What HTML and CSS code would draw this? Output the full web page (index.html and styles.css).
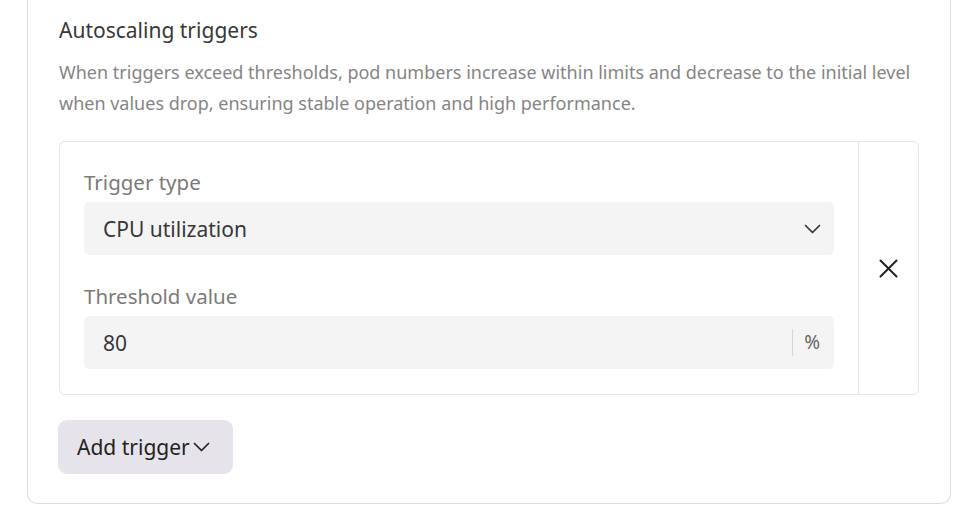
FILE: index.html
```html
<!DOCTYPE html>
<html>
<head>
<meta charset="utf-8">
<link rel="stylesheet" href="styles.css">
</head>
<body>
<div class="page">
  <section class="card">
    <h2 class="title">Autoscaling triggers</h2>
    <p class="desc">When triggers exceed thresholds, pod numbers increase within limits and decrease to the initial level when values drop, ensuring stable operation and high performance.</p>
    <div class="trigger">
      <div class="fields">
        <div class="field">
          <div class="label">Trigger type</div>
          <div class="control">
            <span class="value">CPU utilization</span>
            <svg class="chev" width="17" height="10" viewBox="0 0 17 10"><path d="M1.5 1.5l7 7 7-7" fill="none" stroke="#333" stroke-width="1.7" stroke-linecap="round" stroke-linejoin="round"/></svg>
          </div>
        </div>
        <div class="field">
          <div class="label">Threshold value</div>
          <div class="control">
            <span class="value">80</span>
            <span class="suffix">%</span>
          </div>
        </div>
      </div>
      <div class="remove">
        <svg width="19" height="19" viewBox="0 0 19 19"><path d="M1.5 1.5l16 16M17.5 1.5l-16 16" fill="none" stroke="#222" stroke-width="2" stroke-linecap="round"/></svg>
      </div>
    </div>
    <button class="add">Add trigger<svg width="17" height="10" viewBox="0 0 17 10"><path d="M1.5 1.5l7 7 7-7" fill="none" stroke="#222" stroke-width="1.7" stroke-linecap="round" stroke-linejoin="round"/></svg></button>
  </section>
</div>
</body>
</html>
```

FILE: styles.css
```css
html, body {
  margin: 0;
  padding: 0;
  background: #ffffff;
}
body {
  font-family: "Noto Sans", "Open Sans", sans-serif;
  color: #333;
}
.page {
  padding: 0 19px 15px 27px;
}
.card {
  border: 1px solid #dcdce2;
  border-top: none;
  border-radius: 0 0 10px 10px;
  padding: 16px 31px 29px 31px;
}
.title {
  margin: 0;
  font-size: 21px;
  font-weight: 400;
  line-height: 28px;
  color: #383838;
}
.desc {
  margin: 13px 0 0 0;
  font-size: 18px;
  line-height: 31px;
  color: #858585;
}
.trigger {
  margin-top: 22px;
  display: flex;
  border: 1px solid #e6e6e6;
  border-radius: 6px;
}
.fields {
  flex: 1;
  padding: 26px 24px 25px 24px;
  display: flex;
  flex-direction: column;
  gap: 27px;
}
.label {
  font-size: 20.5px;
  line-height: 28px;
  color: #7a7a7a;
  margin-bottom: 6px;
}
.control {
  height: 53px;
  background: #f4f4f4;
  border-radius: 5px;
  display: flex;
  align-items: center;
  padding: 0 13px 0 19px;
}
.value {
  flex: 1;
  font-size: 21px;
  color: #383838;
}
.chev {
  display: block;
}
.suffix {
  border-left: 1px solid #d6d6d6;
  height: 27px;
  line-height: 27px;
  padding-left: 11px;
  padding-right: 1px;
  font-size: 19px;
  color: #666;
}
.remove {
  width: 59px;
  border-left: 1px solid #e6e6e6;
  display: flex;
  align-items: center;
  justify-content: center;
}
.remove svg {
  display: block;
}
.add {
  margin-top: 25px;
  margin-left: -1px;
  height: 54px;
  padding: 0 23px 0 19px;
  border: none;
  border-radius: 9px;
  background: #e6e4ea;
  font-family: "Noto Sans", "Open Sans", sans-serif;
  font-size: 21px;
  color: #222;
  display: flex;
  align-items: center;
  gap: 3px;
}
.add svg {
  display: block;
}
```
